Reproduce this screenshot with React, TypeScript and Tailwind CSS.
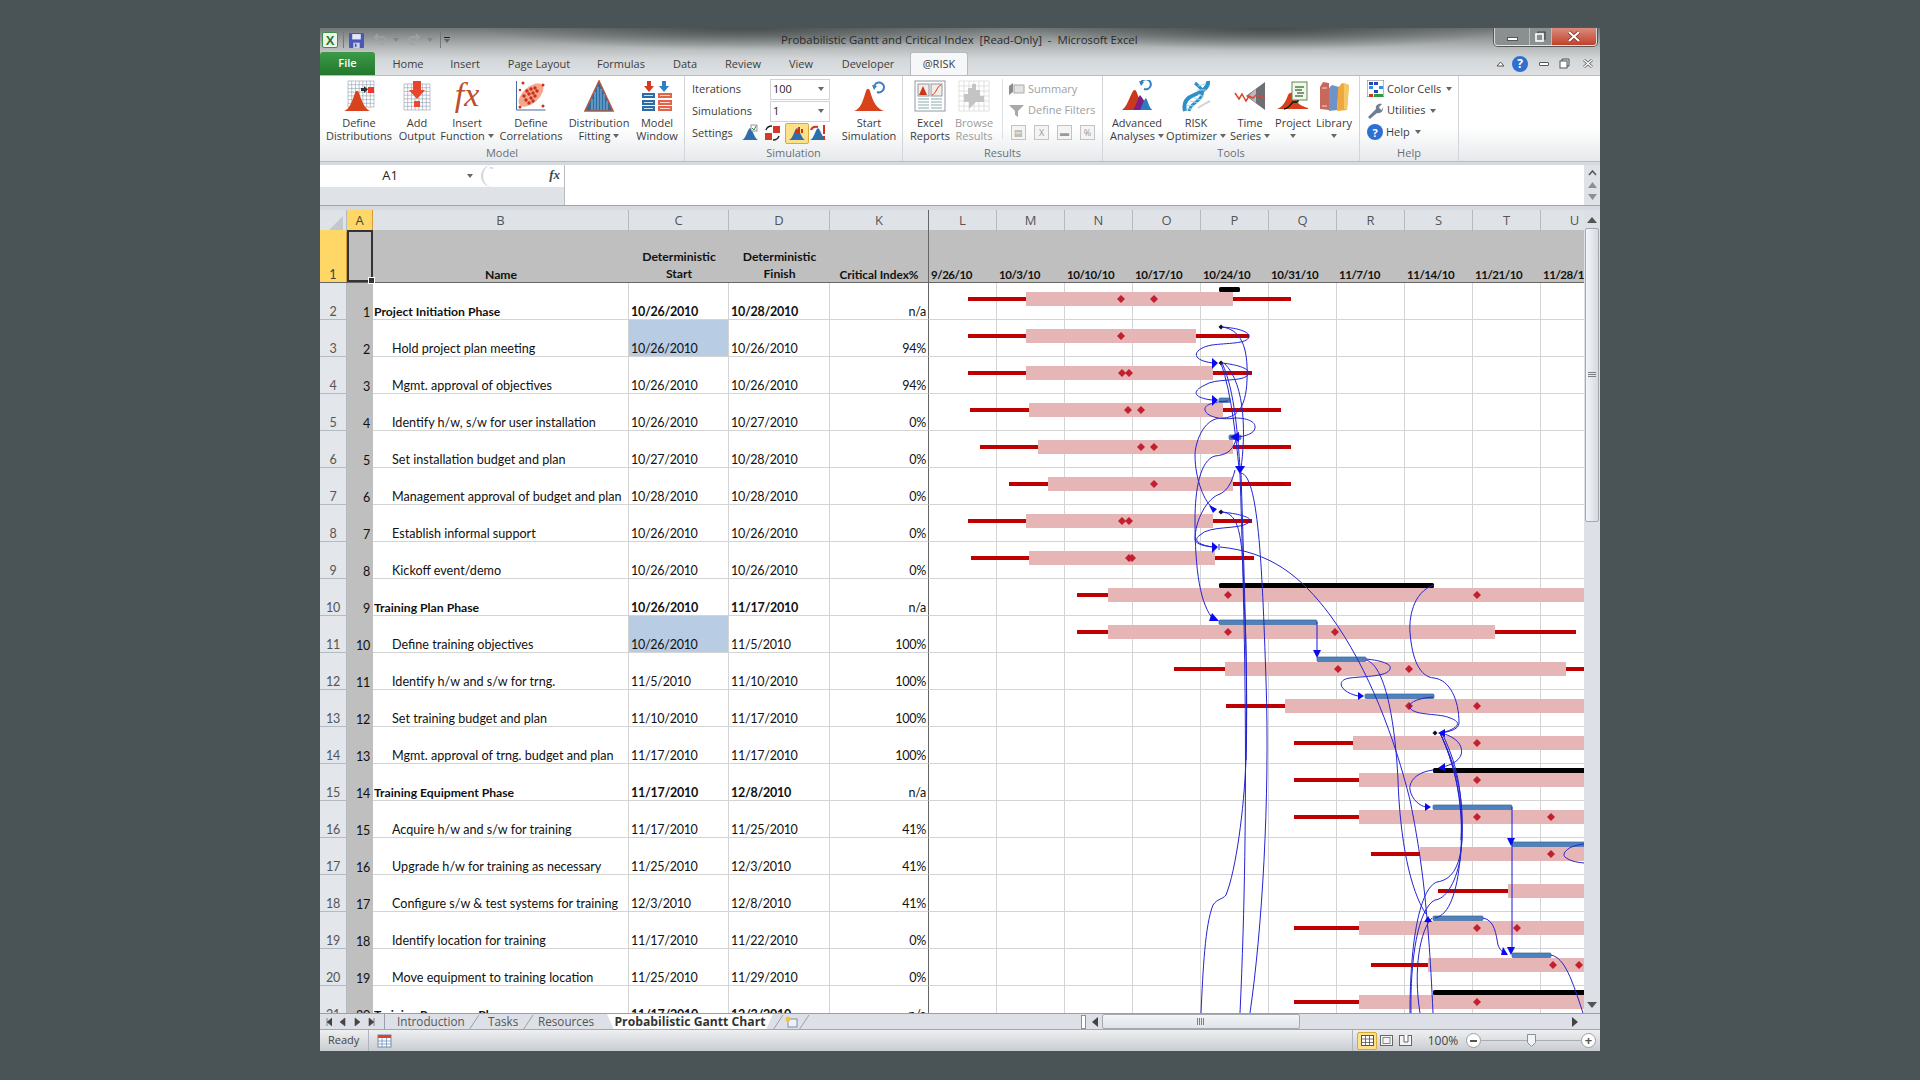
import { ReactNode } from 'react';

type BarRow = { row: number; red: [number, number]; pink: [number, number]; dots: number[] };

const COLS = ['L', 'M', 'N', 'O', 'P', 'Q', 'R', 'S', 'T', 'U'];
const WEEKS = ['9/26/10', '10/3/10', '10/10/10', '10/17/10', '10/24/10', '10/31/10', '11/7/10', '11/14/10', '11/21/10', '11/28/10'];

const ROWS = [
  { n: 1, name: 'Project Initiation Phase', start: '10/26/2010', finish: '10/28/2010', ci: 'n/a', phase: true },
  { n: 2, name: 'Hold project plan meeting', start: '10/26/2010', finish: '10/26/2010', ci: '94%', mark: true },
  { n: 3, name: 'Mgmt. approval of objectives', start: '10/26/2010', finish: '10/26/2010', ci: '94%' },
  { n: 4, name: 'Identify h/w, s/w for user installation', start: '10/26/2010', finish: '10/27/2010', ci: '0%' },
  { n: 5, name: 'Set installation budget and plan', start: '10/27/2010', finish: '10/28/2010', ci: '0%' },
  { n: 6, name: 'Management approval of budget and plan', start: '10/28/2010', finish: '10/28/2010', ci: '0%' },
  { n: 7, name: 'Establish informal support', start: '10/26/2010', finish: '10/26/2010', ci: '0%' },
  { n: 8, name: 'Kickoff event/demo', start: '10/26/2010', finish: '10/26/2010', ci: '0%' },
  { n: 9, name: 'Training Plan Phase', start: '10/26/2010', finish: '11/17/2010', ci: 'n/a', phase: true },
  { n: 10, name: 'Define training objectives', start: '10/26/2010', finish: '11/5/2010', ci: '100%', mark: true },
  { n: 11, name: 'Identify h/w and s/w for trng.', start: '11/5/2010', finish: '11/10/2010', ci: '100%' },
  { n: 12, name: 'Set training budget and plan', start: '11/10/2010', finish: '11/17/2010', ci: '100%' },
  { n: 13, name: 'Mgmt. approval of trng. budget and plan', start: '11/17/2010', finish: '11/17/2010', ci: '100%' },
  { n: 14, name: 'Training Equipment Phase', start: '11/17/2010', finish: '12/8/2010', ci: 'n/a', phase: true },
  { n: 15, name: 'Acquire h/w and s/w for training', start: '11/17/2010', finish: '11/25/2010', ci: '41%' },
  { n: 16, name: 'Upgrade h/w for training as necessary', start: '11/25/2010', finish: '12/3/2010', ci: '41%' },
  { n: 17, name: 'Configure s/w & test systems for training', start: '12/3/2010', finish: '12/8/2010', ci: '41%' },
  { n: 18, name: 'Identify location for training', start: '11/17/2010', finish: '11/22/2010', ci: '0%' },
  { n: 19, name: 'Move equipment to training location', start: '11/25/2010', finish: '11/29/2010', ci: '0%' },
  { n: 20, name: 'Training Resources Phase', start: '11/17/2010', finish: '12/3/2010', ci: 'n/a', phase: true },
];

const BARS: BarRow[] = [
  { row: 2, red: [968, 1291], pink: [1026, 1233], dots: [1121, 1154] },
  { row: 3, red: [968, 1249], pink: [1026, 1196], dots: [1121] },
  { row: 4, red: [968, 1252], pink: [1026, 1213], dots: [1122, 1129] },
  { row: 5, red: [970, 1281], pink: [1029, 1223], dots: [1128, 1141] },
  { row: 6, red: [980, 1291], pink: [1038, 1233], dots: [1141, 1154] },
  { row: 7, red: [1009, 1291], pink: [1048, 1233], dots: [1154] },
  { row: 8, red: [968, 1252], pink: [1026, 1213], dots: [1122, 1129] },
  { row: 9, red: [971, 1254], pink: [1029, 1215], dots: [1129, 1132] },
  { row: 10, red: [1077, 1584], pink: [1108, 1584], dots: [1228, 1477] },
  { row: 11, red: [1077, 1576], pink: [1108, 1495], dots: [1228, 1335] },
  { row: 12, red: [1174, 1584], pink: [1225, 1566], dots: [1338, 1409] },
  { row: 13, red: [1226, 1584], pink: [1285, 1584], dots: [1409, 1477] },
  { row: 14, red: [1294, 1584], pink: [1353, 1584], dots: [1477] },
  { row: 15, red: [1294, 1584], pink: [1359, 1584], dots: [1477] },
  { row: 16, red: [1294, 1584], pink: [1359, 1584], dots: [1477, 1551] },
  { row: 17, red: [1371, 1584], pink: [1420, 1584], dots: [1551] },
  { row: 18, red: [1438, 1584], pink: [1508, 1584], dots: [] },
  { row: 19, red: [1294, 1584], pink: [1359, 1584], dots: [1477, 1517] },
  { row: 20, red: [1371, 1584], pink: [1428, 1584], dots: [1553, 1579] },
  { row: 21, red: [1294, 1584], pink: [1359, 1584], dots: [1477] },
];

const SUMMARY = [
  [1219, 1240, 287],
  [1219, 1434, 583],
  [1433, 1590, 768],
  [1433, 1590, 990],
];

const TASKBARS = [
  [1219, 1230, 398],
  [1229, 1241, 435],
  [1219, 1317, 620],
  [1317, 1366, 657],
  [1365, 1434, 694],
  [1433, 1512, 805],
  [1512, 1590, 842],
  [1433, 1483, 916],
  [1512, 1551, 953],
];

const LINKS = [
  'M1222 327C1240 328 1251 333 1249 337C1247 344 1226 343 1212 345C1194 348 1188 360 1213 363',
  'M1222 327C1245 330 1248 355 1247 380C1246 410 1235 418 1222 418C1202 418 1195 445 1195 455C1195 480 1205 503 1213 508',
  'M1222 363C1240 365 1254 370 1247 376C1240 382 1215 378 1205 385C1190 392 1195 398 1212 400',
  'M1228 401C1212 402 1204 405 1205 410C1207 418 1225 420 1235 418C1250 418 1256 423 1255 428C1254 434 1245 436 1238 437',
  'M1236 440C1232 452 1225 455 1215 456C1200 460 1195 490 1195 520C1195 570 1200 605 1214 620',
  'M1235 470C1232 482 1228 490 1220 494C1207 498 1195 520 1195 540C1197 545 1205 546 1213 547',
  'M1222 512C1240 514 1256 518 1248 523C1238 530 1210 525 1200 535C1190 542 1205 546 1213 547',
  'M1222 363C1235 390 1238 440 1240 468',
  'M1224 363C1247 385 1245 440 1241 468',
  'M1221 363C1232 395 1236 440 1239 468',
  'M1240 473C1244 600 1250 800 1240 1013',
  'M1241 473C1245 600 1248 700 1246 760C1244 810 1236 870 1226 895C1222 900 1218 898 1213 905C1205 925 1203 970 1201 1013',
  'M1241 473C1258 476 1262 560 1266 680C1270 800 1262 930 1250 1013',
  'M1222 512C1238 514 1243 530 1244 600C1247 650 1247 700 1246 760',
  'M1220 547C1270 552 1300 575 1330 615C1370 670 1395 740 1410 800C1420 850 1428 900 1433 1013',
  'M1434 585C1412 592 1409 620 1410 632C1412 660 1420 677 1434 678C1450 680 1459 700 1459 723C1459 730 1447 732 1441 733',
  'M1366 659C1385 661 1392 665 1390 669C1387 677 1365 676 1350 678C1335 680 1340 692 1358 696',
  'M1433 697C1418 698 1407 703 1410 708C1415 716 1440 713 1450 718C1462 722 1460 728 1441 733',
  'M1440 733C1455 736 1464 745 1461 755C1458 762 1450 765 1443 767',
  'M1440 733C1458 770 1464 800 1462 840C1460 870 1450 880 1437 882C1420 888 1410 940 1410 1013',
  'M1440 733C1458 770 1466 820 1460 860C1455 885 1445 899 1435 900C1418 908 1410 960 1411 1013',
  'M1440 733C1460 775 1464 820 1460 860C1457 890 1450 915 1435 918',
  'M1442 733C1460 770 1463 800 1461 840',
  'M1433 770C1412 773 1409 785 1410 790C1412 800 1420 806 1426 807',
  'M1483 918C1495 920 1496 935 1498 945C1500 950 1502 952 1505 953',
  'M1551 955C1565 958 1572 980 1583 1013',
  'M1584 844C1565 846 1562 855 1565 857C1570 861 1575 862 1584 863',
  'M1366 660C1385 665 1395 720 1398 780C1400 840 1410 890 1426 914',
  'M1432 918C1420 930 1413 970 1420 1013',
];

const ARROWS = [
  '1218,363 1212,358 1212,369',
  '1218,400 1212,395 1212,406',
  '1217,509 1209,505 1213,513',
  '1218,547 1212,542 1212,553',
  '1230,437 1239,432 1239,442',
  '1240,474 1235,466 1245,466',
  '1219,621 1212,613 1209,621',
  '1317,658 1313,650 1321,650',
  '1364,696 1358,692 1358,700',
  '1438,733 1445,729 1445,737',
  '1438,768 1445,763 1445,771',
  '1431,807 1425,803 1425,811',
  '1511,846 1507,838 1515,838',
  '1511,955 1507,947 1515,947',
  '1508,955 1503,947 1501,955',
  '1428,916 1424,922 1432,922',
];

function Caret({ className = '' }: { className?: string }) {
  return (
    <svg width="6" height="4" viewBox="0 0 6 4" className={`inline-block ${className}`}>
      <path d="M0 0h6L3 4z" fill="#666" />
    </svg>
  );
}

function Grid({ x, y, size, n, stroke = '#8f9cab' }: { x: number; y: number; size: number; n: number; stroke?: string }) {
  const s = size / n;
  return (
    <g stroke={stroke} strokeWidth=".6" fill="none">
      <rect x={x} y={y} width={size} height={size} fill="#fff" />
      {Array.from({ length: n - 1 }, (_, i) => (
        <g key={i}>
          <path d={`M${x + s * (i + 1)} ${y}v${size}`} />
          <path d={`M${x} ${y + s * (i + 1)}h${size}`} />
        </g>
      ))}
    </g>
  );
}

function Icon({ children, size = 32 }: { children: ReactNode; size?: number }) {
  return (
    <svg width={size} height={size} viewBox="0 0 32 32">
      {children}
    </svg>
  );
}

const Bell = ({ fill = '#d8421c' }: { fill?: string }) => <path d="M1 31C8 29 10 20 13 11C14 8 16 8 17 11C20 22 24 29 31 31z" fill={fill} />;

function DefineIcon() {
  return (
    <Icon>
      <Grid x={5} y={1} size={26} n={7} />
      <rect x={25} y={7} width={6} height={6} fill="#e8392a" />
      <path d="M18 8h3V6l4 3.500-4 3.500v-2h-3z" fill="#333" />
      <path d="M1 31C7 29 9 21 12 13C13 10 15 10 16 13C19 22 22 29 27 31z" fill="#d8421c" />
    </Icon>
  );
}
function AddOutputIcon() {
  return (
    <Icon>
      <Grid x={3} y={4} size={26} n={7} />
      <rect x={13} y={21} width={6} height={6} fill="#f0452c" />
      <path d="M12 1h8v9h4l-8 9-8-9h4z" fill="#e8452a" />
    </Icon>
  );
}
function FxIcon() {
  return <span className="block h-[32px] text-[34px] leading-[30px] italic text-[#bd4f2d] [font-family:'Liberation_Serif',serif]">fx</span>;
}
function CorrelIcon() {
  const dots = [[12, 11], [16, 9], [20, 8], [9, 16], [14, 14], [18, 13], [22, 11], [11, 20], [16, 18], [20, 16], [14, 23], [18, 21]];
  return (
    <Icon>
      <path d="M1.500 1v29h29" stroke="#46689c" fill="none" />
      <ellipse cx="16" cy="15" rx="15" ry="8" fill="#f6a68c" transform="rotate(-42 16 15)" />
      {dots.map(([x, y]) => (
        <circle key={`${x}${y}`} cx={x} cy={y} r="1.700" fill="#c8301a" />
      ))}
      <circle cx="8" cy="3" r="1.500" fill="#c8301a" />
      <circle cx="5" cy="10" r="1.200" fill="#c8301a" />
      <circle cx="5" cy="27" r="1.500" fill="#c8301a" />
      <circle cx="28" cy="26" r="1.500" fill="#c8301a" />
      <circle cx="28" cy="5" r="1.500" fill="#c8301a" />
    </Icon>
  );
}
function FittingIcon() {
  return (
    <Icon>
      <path d="M16 1L2 31h28z" fill="#2e6da4" stroke="#b5573f" strokeWidth="1.600" />
      <path d="M12 12v18M15 7v23M18 9v21M21 14v16M9 19v11M24 21v9" stroke="#9cc3e4" strokeWidth=".9" />
    </Icon>
  );
}
function ModelWinIcon() {
  return (
    <Icon>
      <path d="M6 1h4v5h3l-5 6-5-6h3z" fill="#d43a22" />
      <path d="M21 1h4v5h3l-5 6-5-6h3z" fill="#2f7fc6" />
      {[13, 20, 26].map(y => (
        <g key={y}>
          <rect x={1} y={y} width={13} height={5} fill="#2e6da4" />
          <rect x={3} y={y + 2} width={9} height={1} fill="#cfe0f0" />
          <rect x={17} y={y} width={14} height={5} fill="#e0654a" />
          <rect x={19} y={y + 2} width={10} height={1} fill="#f8d8cf" />
        </g>
      ))}
    </Icon>
  );
}
function StartIcon() {
  return (
    <Icon>
      <Bell />
      <path d="M21 7a5 5 0 1 1 3 5" stroke="#3f7fc0" strokeWidth="2" fill="none" />
      <path d="M19 5l5 1-3 4z" fill="#3f7fc0" />
    </Icon>
  );
}
function ReportsIcon() {
  return (
    <Icon>
      <rect x="1" y="1" width="30" height="30" fill="#fff" stroke="#8f99a4" />
      <rect x="4" y="4" width="11" height="12" fill="#f4ece4" stroke="#8f99a4" />
      <rect x="17" y="4" width="11" height="12" fill="#f4ece4" stroke="#8f99a4" />
      <path d="M5 15L9 6l4 9z" fill="#c8361c" />
      <path d="M18 15c4-1 5-9 9-10" stroke="#c8361c" fill="none" />
      <path d="M4 19h11M4 22h11M4 25h11M4 28h11M17 19h11M17 22h11M17 25h11M17 28h11" stroke="#8aa" strokeWidth="1.200" />
    </Icon>
  );
}
function BrowseIcon() {
  return (
    <Icon>
      <Grid x={1} y={1} size={30} n={6} stroke="#cfcfcf" />
      <path d="M6 22V14h4V8h4V4h4v6h4v6h4v6h-8l-7 7v-7z" fill="#c4c4c4" />
    </Icon>
  );
}
function AdvancedIcon() {
  return (
    <Icon>
      <path d="M1 30C6 27 8 18 12 11C14 9 15 10 16 13C19 22 24 27 31 30z" fill="#c93a1d" />
      <path d="M12 30C15 26 17 18 19 15C22 18 26 27 31 30z" fill="#7a1f88" />
      <path d="M19 30C21 26 23 19 25 18C27 21 28 27 31 30z" fill="#2d7dbd" />
      <path d="M20 3a5 5 0 1 1 3 6" stroke="#2f7fc6" strokeWidth="2" fill="none" />
      <path d="M18 1l5 1-3 4z" fill="#2f7fc6" />
    </Icon>
  );
}
function OptimizerIcon() {
  return (
    <Icon>
      <path d="M28 1C29 9 19 13 14 15C6 18 3 23 5 31" stroke="#2d8fc4" strokeWidth="4" fill="none" />
      <path d="M15 3C20 7 25 11 21 17C17 23 10 24 9 31" stroke="#2d8fc4" strokeWidth="3" fill="none" />
      <path d="M18 6l7-2M17 10l9 0M18 14l6 3M14 18l7 2M10 21l8 2M6 25l8 1M6 28l5 1" stroke="#a6d5ee" strokeWidth="1" />
      <path d="M18 28l8-5 4-2" stroke="#d0d3d6" strokeWidth="2" fill="none" />
    </Icon>
  );
}
function TimeIcon() {
  return (
    <Icon>
      <path d="M31 2v28L12 16z" fill="#6d6f74" />
      <path d="M22 9v14L14 16z" fill="#b9bbbe" />
      <path d="M1 13l4 6 3-5 4 7 3-5 4 2 3-3 9 3" stroke="#e0452a" strokeWidth="1.500" fill="none" />
    </Icon>
  );
}
function ProjectIcon() {
  return (
    <Icon>
      <path d="M0 29C6 27 9 21 11 15C13 12 16 12 17 16C19 23 24 26 31 28v1z" fill="#d4401c" />
      <path d="M7 29c4 0 6-4 9-7h4" stroke="#111" strokeWidth="1.400" fill="none" />
      <path d="M19 20l2 3 1-3z" fill="#111" />
      <rect x="15" y="2" width="15" height="18" fill="#f3f6ee" stroke="#5e8a4e" />
      <path d="M18 7h9M18 10h7M20 13h7M18 16h8" stroke="#4f7d47" strokeWidth="1.300" />
    </Icon>
  );
}
function LibraryIcon() {
  return (
    <Icon>
      <path d="M2 7l3-5 6 1v27l-9-1z" fill="#c8685b" />
      <path d="M4 8h5M4 26h5" stroke="#f3d8d2" />
      <path d="M11 8l3-3 7 2-2 23-8 1z" fill="#6f93c7" />
      <path d="M20 8l4-5 7 2-2 25-10 1z" fill="#eea83c" />
      <path d="M26 3l5 2-2 25-3-1z" fill="#f5c766" />
    </Icon>
  );
}

function SmallSettings({ kind }: { kind: number }) {
  const hill = <path d="M1 16C5 15 6 6 9 4C12 6 13 14 17 16z" fill="#2f6ea8" />;
  return (
    <svg width="18" height="18" viewBox="0 0 18 18">
      {kind === 0 && (
        <>
          {hill}
          <rect x="10" y="1" width="6" height="6" fill="#fff" stroke="#668" strokeWidth=".7" />
          <path d="M11 4l2 2 2-4" stroke="#2a8a3a" fill="none" />
        </>
      )}
      {kind === 1 && (
        <>
          <rect x="1" y="9" width="7" height="7" fill="#d23a2a" />
          <rect x="9" y="2" width="7" height="7" fill="#d23a2a" />
          <path d="M2 6c1-3 3-4 6-4M15 12c-1 3-3 4-6 4" stroke="#222" strokeWidth="1.300" fill="none" />
        </>
      )}
      {kind === 2 && (
        <>
          {hill}
          <path d="M7 6h2v3H7zM10 3h2v6h-2zM13 5h2v4h-2z" fill="#c8361c" />
        </>
      )}
      {kind === 3 && (
        <>
          {hill}
          <path d="M2 6c1-3 3-4 7-3" stroke="#c8361c" strokeWidth="2" fill="none" />
          <path d="M14 1h2v9h-2zM14 12h2v3h-2z" fill="#d8301c" />
        </>
      )}
    </svg>
  );
}

function Big({ w, lines, icon, muted, caret }: { w: number; lines: [string, string?]; icon: ReactNode; muted?: boolean; caret?: boolean }) {
  return (
    <div className={`flex shrink-0 flex-col items-center pt-[4px] ${muted ? 'text-[#9a9a9a]' : 'text-[#3b3b3b]'}`} style={{ width: w }}>
      <div className="flex h-[32px] items-center justify-center">{icon}</div>
      <div className="mt-[4px] whitespace-nowrap text-center text-[11px] leading-[13px]">
        <div>{lines[0]}</div>
        <div className="flex h-[13px] items-center justify-center gap-[3px]">
          {lines[1]}
          {caret && <Caret />}
        </div>
      </div>
    </div>
  );
}

function Group({ w, label, children, pl = 0 }: { w: number; label: string; children: ReactNode; pl?: number }) {
  return (
    <div className="flex h-full shrink-0 flex-col border-r border-[#d2d6db]" style={{ width: w }}>
      <div className="flex h-[67px] w-full shrink-0" style={{ paddingLeft: pl }}>
        {children}
      </div>
      <div className="h-[18px] shrink-0 text-center text-[11px] leading-[20px] text-[#6a6f76]">{label}</div>
    </div>
  );
}

function Tab({ w, children }: { w: number; children: ReactNode }) {
  return (
    <div className="shrink-0 pt-[4px] text-center text-[11px] leading-[16px] text-[#3d3d3d]" style={{ width: w }}>
      {children}
    </div>
  );
}

function Gantt() {
  return (
    <svg className="absolute left-0 top-0" width="1264" height="803" viewBox="320 210 1264 803">
      {BARS.map(b => {
        const top = 292 + 37 * (b.row - 2);
        return (
          <g key={b.row}>
            <rect x={b.red[0]} y={top + 5} width={b.red[1] - b.red[0]} height={4} fill="#c00000" />
            <rect x={b.pink[0]} y={top} width={b.pink[1] - b.pink[0]} height={14} fill="#e6b5b5" />
            {b.dots.map(x => (
              <path key={x} d={`M${x} ${top + 3}l4 4-4 4-4-4z`} fill="#c2202e" />
            ))}
          </g>
        );
      })}
      {SUMMARY.map(([a, b, y]) => (
        <rect key={y} x={a} y={y} width={b - a} height={5} rx={1.500} fill="#000" />
      ))}
      {TASKBARS.map(([a, b, y]) => (
        <rect key={y} x={a} y={y} width={b - a} height={4.500} rx={1} fill="#4f81bd" stroke="#3b6496" strokeWidth=".7" />
      ))}
      {[[1221, 327], [1221, 363], [1221, 512], [1435, 733]].map(([x, y]) => (
        <path key={y} d={`M${x} ${y - 2.500}l2.500 2.500-2.500 2.500-2.500-2.500z`} fill="#111" />
      ))}
      <path d="M1219 544v6" stroke="#1a1ad8" />
      <path d="M1317 622V652M1512 807V950" stroke="#1818e0" fill="none" />
      {LINKS.map(d => (
        <path key={d} d={d} stroke="#2323d4" strokeWidth="1" fill="none" />
      ))}
      {ARROWS.map(p => (
        <polygon key={p} points={p} fill="#0a0af0" />
      ))}
    </svg>
  );
}

function Sheet() {
  const gridCols = 'grid grid-cols-[27px_26px_256px_100px_101px_99px_repeat(10,68px)]';
  const cell = 'border-b border-r border-[#d4d4d4]';
  const figure = 'text-[12.500px] tracking-[-0.27px]';
  return (
    <div className="relative h-[803px] w-[1264px] shrink-0 overflow-hidden bg-white [font-family:Lato,'Liberation_Sans',sans-serif] text-[12.600px] leading-[17px] text-[#111]">
      <div className={`${gridCols} h-[20px] bg-[#dfe3e8] text-[13px] leading-[21px] text-[#555] [font-family:'Open_Sans',sans-serif]`}>
        <div className="relative border-r border-[#b5bac0]">
          <svg width="14" height="14" viewBox="0 0 14 14" className="absolute bottom-[2px] right-[3px]">
            <path d="M14 0v14H0z" fill="#c3c8cd" />
          </svg>
        </div>
        <div className="border-r border-b border-[#d39d3a] bg-[#ffd766] text-center text-[#444]">A</div>
        {['B', 'C', 'D'].map(c => (
          <div key={c} className="border-r border-[#b5bac0] text-center">{c}</div>
        ))}
        <div className="border-r border-[#666] text-center">K</div>
        {COLS.map(c => (
          <div key={c} className="border-r border-[#b5bac0] text-center">{c}</div>
        ))}
      </div>
      <div className={`${gridCols} h-[53px] border-b border-[#666] bg-[#bfbfbf] font-bold`}>
        <div className="flex items-end justify-center border-r border-[#d39d3a] bg-[#ffd766] font-normal leading-[15px] text-[#444]">1</div>
        <div className="relative border-2 border-[#333]">
          <div className="absolute -bottom-[3px] -right-[3px] h-[5px] w-[5px] bg-[#333] outline outline-1 outline-white" />
        </div>
        <div className="flex items-end justify-center text-[12.200px] leading-[15px]">Name</div>
        <div className="flex items-end justify-center text-center text-[12.200px]">Deterministic<br />Start</div>
        <div className="flex items-end justify-center text-center text-[12.200px]">Deterministic<br />Finish</div>
        <div className="flex items-end justify-center whitespace-nowrap border-r border-[#666] text-[11.800px] leading-[15px]">Critical Index%</div>
        {WEEKS.map(w => (
          <div key={w} className="flex items-end whitespace-nowrap pl-[2px] text-[11.500px] leading-[15px] tracking-[-0.45px]">{w}</div>
        ))}
      </div>
      {ROWS.map(r => (
        <div key={r.n} className={`${gridCols} h-[37px] leading-[15px]`}>
          <div className={`flex items-end justify-center border-b border-r border-[#b5bac0] bg-[#e3e6ea] text-[#555] ${figure}`}>{r.n + 1}</div>
          <div className={`flex items-end justify-end bg-[#bfbfbf] pr-[3px] ${figure}`}>{r.n}</div>
          <div className={`flex items-end whitespace-nowrap ${cell} ${r.phase ? 'pl-[1px] text-[12.200px] font-bold' : 'pl-[19px]'}`}>{r.name}</div>
          <div className={`flex items-end pl-[2px] ${figure} ${cell} ${r.phase ? 'font-bold' : ''} ${r.mark ? 'bg-[#b8cce4]' : ''}`}>{r.start}</div>
          <div className={`flex items-end pl-[2px] ${figure} ${cell} ${r.phase ? 'font-bold' : ''}`}>{r.finish}</div>
          <div className={`flex items-end justify-end border-b border-r border-b-[#d4d4d4] border-r-[#666] pr-[2px] ${figure}`}>{r.ci}</div>
          {COLS.map(c => (
            <div key={c} className={cell} />
          ))}
        </div>
      ))}
      <Gantt />
    </div>
  );
}

function VScroll() {
  return (
    <div className="relative flex h-[803px] w-[16px] flex-col items-center bg-[#dde1e7]">
      <svg width="10" height="6" viewBox="0 0 10 6" className="mt-[7px]">
        <path d="M0 6h10L5 0z" fill="#555" />
      </svg>
      <div className="mt-[5px] flex h-[294px] w-[14px] items-center justify-center rounded-[2px] border border-[#a5aab0] bg-gradient-to-r from-[#f3f5f8] to-[#d6dae1] text-[#777]">
        <svg width="8" height="6" viewBox="0 0 8 6">
          <path d="M0 .5h8M0 2.500h8M0 4.500h8" stroke="#7c8086" />
        </svg>
      </div>
      <svg width="10" height="6" viewBox="0 0 10 6" className="absolute bottom-[5px]">
        <path d="M0 0h10L5 6z" fill="#555" />
      </svg>
    </div>
  );
}

function SheetTabs() {
  const slash = (
    <svg width="12" height="16" viewBox="0 0 12 16" className="shrink-0">
      <path d="M0 16L10 1" stroke="#9aa0a7" fill="none" />
    </svg>
  );
  return (
    <div className="flex h-[16px] w-full items-stretch border-t border-[#9aa0a7] bg-[#dde1e7] text-[11.700px] leading-[15px] text-[#555] [font-family:'Open_Sans',sans-serif]">
      <div className="flex w-[59px] items-center justify-around text-[#444]">
        {['M5 1v8M5 5l5-4v8z', 'M8 1v8L3 5z', 'M3 1v8l5-4z', 'M7 1v8M7 5L2 1v8z'].map(d => (
          <svg key={d} width="10" height="10" viewBox="0 0 10 10">
            <path d={d} stroke="#444" fill="#444" strokeWidth=".6" />
          </svg>
        ))}
      </div>
      <div className="ml-[5px] flex items-center">
        <div className="h-full w-px bg-[#9aa0a7]" />
        <div className="w-[84px] pl-[12px]">Introduction</div>
        {slash}
        <div className="w-[42px] pl-[7px]">Tasks</div>
        {slash}
        <div className="w-[70px] pl-[3px]">Resources</div>
        <div className="ml-[2px] h-full w-[166px] bg-white text-center text-[12.200px] font-bold leading-[15px] text-[#333] [clip-path:polygon(0_0,100%_0,96%_100%,4%_100%)]">
          Probabilistic Gantt Chart
        </div>
        {slash}
        <svg width="14" height="12" viewBox="0 0 14 12" className="shrink-0">
          <rect x="3" y="3" width="9" height="8" fill="#eef2f7" stroke="#7d8fa8" />
          <circle cx="3" cy="3" r="2.500" fill="#f3c441" />
        </svg>
        {slash}
      </div>
      <div className="ml-auto flex w-[522px] items-center">
        <div className="ml-[3px] h-[14px] w-[5px] border border-[#8a9097] bg-white" />
        <svg width="7" height="10" viewBox="0 0 7 10" className="ml-[6px]">
          <path d="M6 0v10L0 5z" fill="#444" />
        </svg>
        <div className="ml-[3px] flex h-[15px] w-[198px] items-center justify-center rounded-[2px] border border-[#a5aab0] bg-gradient-to-b from-[#f3f5f8] to-[#dfe2e8]">
          <svg width="8" height="7" viewBox="0 0 8 7">
            <path d="M.5 0v7M2.500 0v7M4.500 0v7M6.500 0v7" stroke="#7c8086" />
          </svg>
        </div>
        <svg width="7" height="10" viewBox="0 0 7 10" className="ml-[272px]">
          <path d="M0 0v10l6-5z" fill="#444" />
        </svg>
      </div>
    </div>
  );
}

function StatusBar() {
  return (
    <div className="flex h-[22px] w-full items-center border-t border-[#a2a7ad] bg-gradient-to-b from-[#eef0f2] to-[#c9ccd1] text-[11px] text-[#444]">
      <div className="w-[48px] pl-[8px]">Ready</div>
      <div className="h-full w-px bg-[#b0b4ba]" />
      <svg width="15" height="15" viewBox="0 0 15 15" className="ml-[8px]">
        <rect x="1" y="2" width="13" height="12" fill="#fff" stroke="#7b8a9e" />
        <rect x="1" y="2" width="13" height="3" fill="#d9452b" />
        <path d="M5 5v9M9.500 5v9M1 8h13M1 11h13" stroke="#5b86bb" strokeWidth=".7" />
      </svg>
      <div className="ml-auto flex h-full items-center">
        <div className="mr-[4px] h-full w-px bg-[#b0b4ba]" />
        <div className="flex h-[18px] w-[20px] items-center justify-center rounded-[2px] border border-[#d9a93a] bg-[#fde08a]">
          <svg width="13" height="11" viewBox="0 0 13 11">
            <rect x=".5" y=".5" width="12" height="10" fill="#fff" stroke="#555" />
            <path d="M4.500 0v11M8.500 0v11M0 4h13M0 7.500h13" stroke="#555" strokeWidth=".8" />
          </svg>
        </div>
        <svg width="13" height="11" viewBox="0 0 13 11" className="ml-[3px]">
          <rect x=".5" y=".5" width="12" height="10" fill="#f4f4f4" stroke="#666" />
          <rect x="3" y="2.500" width="7" height="6" fill="none" stroke="#888" />
        </svg>
        <svg width="13" height="11" viewBox="0 0 13 11" className="ml-[6px]">
          <rect x=".5" y=".5" width="12" height="10" fill="#f4f4f4" stroke="#666" />
          <path d="M5 0v7h4V0" fill="#fff" stroke="#666" />
        </svg>
        <div className="ml-[14px] w-[34px] text-center text-[12px]">100%</div>
        <div className="ml-[6px] flex h-[15px] w-[15px] items-center justify-center rounded-full border border-[#9aa0a6] bg-white">
          <div className="h-[2px] w-[7px] bg-[#555]" />
        </div>
        <div className="relative h-px w-[100px] bg-[#a8adb3]">
          <svg width="9" height="13" viewBox="0 0 9 13" className="absolute -top-[6px] left-[46px]">
            <path d="M.5.5h8v8L4.500 12.500.5 8.500z" fill="#f2f3f5" stroke="#8a9097" />
          </svg>
        </div>
        <div className="mr-[4px] flex h-[15px] w-[15px] items-center justify-center rounded-full border border-[#9aa0a6] bg-white text-[13px] font-bold leading-none text-[#555]">+</div>
      </div>
    </div>
  );
}

export default function App() {
  return (
    <div className="h-[1080px] w-[1920px] overflow-hidden bg-[#4a5356] pl-[320px] pt-[28px] [font-family:'Open_Sans',sans-serif]">
      <div className="flex h-[1023px] w-[1280px] flex-col bg-[#d5dae0]">
        {/* Title bar and ribbon tabs sit on the aero glass */}
        <div className="relative h-[47px] shrink-0 bg-[radial-gradient(ellipse_260px_22px_at_33%_0,#3f4545cc,transparent),radial-gradient(ellipse_240px_22px_at_74%_0,#3f4545dd,transparent),linear-gradient(to_bottom,#6f7576_0%,#b3b6b6_40%,#d3d6d8_65%,#dfe2e5_100%)]">
          <div className="relative flex h-[24px] items-center">
            <div className="ml-[2px] flex h-[16px] w-[16px] items-center justify-center rounded-[2px] border border-[#3f8f48] bg-[#eef6ea] text-[13px] font-bold leading-none text-[#1c7a30] [font-family:'Liberation_Sans',sans-serif]">X</div>
            <div className="ml-[5px] h-[16px] w-px bg-[#777]" />
            <svg width="15" height="15" viewBox="0 0 14 14" className="ml-[5px]">
              <rect width="14" height="14" rx="1" fill="#4a56b8" />
              <rect x="3" y="1" width="8" height="5" fill="#e4e9f7" />
              <rect x="4" y="9" width="6" height="5" fill="#cdd3de" />
              <rect x="5.500" y="10" width="1.500" height="3" fill="#4a56b8" />
            </svg>
            <svg width="14" height="14" viewBox="0 0 14 14" className="ml-[9px]">
              <path d="M3 4h6a3.500 3.500 0 0 1 0 7H6M5 1L2 4l3 3" stroke="#a0a4a4" strokeWidth="1.600" fill="none" />
            </svg>
            <Caret className="ml-[6px] opacity-40" />
            <svg width="14" height="14" viewBox="0 0 14 14" className="ml-[8px]">
              <path d="M11 4H5a3.500 3.500 0 0 0 0 7h3M9 1l3 3-3 3" stroke="#a0a4a4" strokeWidth="1.600" fill="none" />
            </svg>
            <Caret className="ml-[6px] opacity-40" />
            <div className="ml-[7px] h-[16px] w-px bg-[#777]" />
            <div className="ml-[3px] flex flex-col items-center gap-[1px]">
              <div className="h-px w-[6px] bg-[#222]" />
              <Caret />
            </div>
            <div className="absolute left-[461px] top-[3px] whitespace-pre text-[11.400px] leading-[18px] text-[#2a2a2a]">
              Probabilistic Gantt and Critical Index  [Read-Only]  -  Microsoft Excel
            </div>
            <div className="absolute left-[1174px] top-0 flex h-[18px] w-[103px] overflow-hidden rounded-b-[4px] border border-t-0 border-[#ffffffaa] shadow-[0_0_0_1px_#555]">
              <div className="flex w-[35px] items-center justify-center border-r border-[#ffffff66] bg-[#8a8f90]">
                <div className="mt-[5px] h-[4px] w-[11px] border border-[#555] bg-white" />
              </div>
              <div className="flex w-[22px] items-center justify-center border-r border-[#ffffff66] bg-[#8a8f90]">
                <svg width="11" height="11" viewBox="0 0 11 11">
                  <path d="M3 3V1h7v7H8" fill="none" stroke="#444" strokeWidth="1.200" />
                  <rect x="1" y="3" width="7" height="7" fill="none" stroke="#fff" strokeWidth="1.600" />
                </svg>
              </div>
              <div className="flex flex-1 items-center justify-center bg-gradient-to-b from-[#d98a7c] to-[#c0402a]">
                <svg width="14" height="11" viewBox="0 0 14 11">
                  <path d="M2 1l10 9M12 1L2 10" stroke="#7a2a20" strokeWidth="3.600" />
                  <path d="M2 1l10 9M12 1L2 10" stroke="#fff" strokeWidth="2.200" />
                </svg>
              </div>
            </div>
          </div>
          <div className="flex h-[23px] items-stretch">
            <div className="flex w-[55px] items-center justify-center rounded-t-[3px] bg-gradient-to-b from-[#3c9a46] to-[#23782e] text-[11px] font-semibold text-white">File</div>
            <Tab w={66}>Home</Tab>
            <Tab w={48}>Insert</Tab>
            <Tab w={100}>Page Layout</Tab>
            <Tab w={64}>Formulas</Tab>
            <Tab w={64}>Data</Tab>
            <Tab w={52}>Review</Tab>
            <Tab w={64}>View</Tab>
            <Tab w={70}>Developer</Tab>
            <div className="ml-[7px] w-[58px] rounded-t-[3px] border border-b-0 border-[#b6babf] bg-[#f6f7f8] pt-[3px] text-center text-[11px] leading-[16px] text-[#3d3d3d]">@RISK</div>
            <div className="ml-auto flex items-center pr-[7px]">
              <svg width="9" height="7" viewBox="0 0 9 7">
                <path d="M1 6l3.500-4L8 6z" fill="#fff" stroke="#555" />
              </svg>
              <div className="ml-[7px] flex h-[16px] w-[16px] items-center justify-center rounded-full bg-[#2f6fd0] text-[12px] font-bold leading-none text-white">?</div>
              <div className="ml-[11px] h-[4px] w-[10px] rounded-[1px] border border-[#555] bg-white" />
              <svg width="11" height="11" viewBox="0 0 11 11" className="ml-[10px]">
                <path d="M3 3V1h7v7H8" fill="none" stroke="#555" />
                <rect x="1" y="3" width="7" height="7" fill="#fff" stroke="#555" />
              </svg>
              <svg width="10" height="9" viewBox="0 0 10 9" className="ml-[13px]">
                <path d="M1 1l8 7M9 1L1 8" stroke="#555" strokeWidth="2.800" />
                <path d="M1 1l8 7M9 1L1 8" stroke="#fff" strokeWidth="1.400" />
              </svg>
            </div>
          </div>
        </div>

        {/* Ribbon */}
        <div className="flex h-[87px] shrink-0 border-y border-[#b9bdc2] bg-gradient-to-b from-white from-60% to-[#e6e9ec]">
          <Group w={365} label="Model" pl={5}>
            <Big w={68} lines={['Define', 'Distributions']} icon={<DefineIcon />} />
            <Big w={48} lines={['Add', 'Output']} icon={<AddOutputIcon />} />
            <Big w={52} lines={['Insert', 'Function']} icon={<FxIcon />} caret />
            <Big w={76} lines={['Define', 'Correlations']} icon={<CorrelIcon />} />
            <Big w={60} lines={['Distribution', 'Fitting']} icon={<FittingIcon />} caret />
            <Big w={56} lines={['Model', 'Window']} icon={<ModelWinIcon />} />
          </Group>
          <Group w={218} label="Simulation" pl={7}>
            <div className="w-[145px] shrink-0 pt-[2px] text-[11px] text-[#3b3b3b]">
              <div className="flex h-[22px] items-center">
                <div className="w-[78px]">Iterations</div>
                <div className="flex h-[21px] w-[60px] items-center justify-between border border-[#d0d4d9] bg-white px-[2px] text-[#222]">
                  100
                  <Caret className="mr-[3px]" />
                </div>
              </div>
              <div className="flex h-[22px] items-center">
                <div className="w-[78px]">Simulations</div>
                <div className="flex h-[21px] w-[60px] items-center justify-between border border-[#d0d4d9] bg-white px-[2px] text-[#222]">
                  1
                  <Caret className="mr-[3px]" />
                </div>
              </div>
              <div className="flex h-[22px] items-center">
                <div className="w-[49px]">Settings</div>
                <SmallSettings kind={0} />
                <div className="ml-[5px]"><SmallSettings kind={1} /></div>
                <div className="ml-[3px] flex h-[21px] w-[24px] items-center justify-center rounded-[2px] border border-[#d9a93a] bg-[#fde08a]">
                  <SmallSettings kind={2} />
                </div>
                <SmallSettings kind={3} />
              </div>
            </div>
            <Big w={64} lines={['Start', 'Simulation']} icon={<StartIcon />} />
          </Group>
          <Group w={200} label="Results" pl={2}>
            <Big w={50} lines={['Excel', 'Reports']} icon={<ReportsIcon />} />
            <Big w={38} lines={['Browse', 'Results']} icon={<BrowseIcon />} muted />
            <div className="ml-[9px] mt-[3px] h-[60px] w-px bg-[#dcdfe3]" />
            <div className="ml-[5px] flex flex-col pt-[2px] text-[11px] text-[#a0a0a0]">
              <div className="flex h-[22px] items-center gap-[3px]">
                <svg width="17" height="14" viewBox="0 0 17 14">
                  <path d="M1 13V4l4-3v9z" fill="#8d8d8d" />
                  <rect x="6" y="3" width="10" height="8" fill="#e3e3e3" stroke="#aaa" />
                </svg>
                Summary
              </div>
              <div className="flex h-[22px] items-center gap-[3px]">
                <svg width="17" height="14" viewBox="0 0 17 14">
                  <path d="M1 1h15l-6 6v6l-3-2V7z" fill="#a9a9a9" />
                </svg>
                Define Filters
              </div>
              <div className="flex h-[22px] items-center gap-[8px] pl-[3px]">
                {['▤', 'X', '▬', '%'].map(g => (
                  <div key={g} className="flex h-[15px] w-[15px] items-center justify-center border border-[#c3c3c3] bg-[#f4f4f4] text-[9px] leading-none text-[#999]">{g}</div>
                ))}
              </div>
            </div>
          </Group>
          <Group w={257} label="Tools" pl={4}>
            <Big w={60} lines={['Advanced', 'Analyses']} icon={<AdvancedIcon />} caret />
            <Big w={58} lines={['RISK', 'Optimizer']} icon={<OptimizerIcon />} caret />
            <Big w={50} lines={['Time', 'Series']} icon={<TimeIcon />} caret />
            <Big w={36} lines={['Project', '']} icon={<ProjectIcon />} caret />
            <Big w={46} lines={['Library', '']} icon={<LibraryIcon />} caret />
          </Group>
          <Group w={99} label="Help" pl={7}>
            <div className="flex flex-col pt-[2px] text-[11px] text-[#3b3b3b]">
              <div className="flex h-[22px] items-center gap-[3px]">
                <svg width="17" height="17" viewBox="0 0 17 17">
                  <rect width="17" height="17" fill="#fff" stroke="#777" />
                  <path d="M2 2h4v3H2zM7 2h4v3H7z" fill="#2346c4" />
                  <path d="M2 6h4v3H2zM12 6h4v3h-4z" fill="#2f8fe0" />
                  <path d="M7 10h4v3H7z" fill="#2346c4" />
                  <path d="M2 14h4v3H2z" fill="#d8301c" />
                  <path d="M7 14h9v3H7z" fill="#2a9a3a" />
                </svg>
                Color Cells
                <Caret className="ml-[2px]" />
              </div>
              <div className="flex h-[22px] items-center gap-[3px]">
                <svg width="17" height="17" viewBox="0 0 17 17">
                  <path d="M1 15L9 7c-1-3 2-6 6-5l-3 3 1 2 2 1 1-3c1 4-3 7-6 6l-7 6z" fill="#6f7f92" />
                </svg>
                Utilities
                <Caret className="ml-[2px]" />
              </div>
              <div className="flex h-[22px] items-center gap-[3px]">
                <div className="flex h-[16px] w-[16px] items-center justify-center rounded-full bg-[#2f6fd0] text-[11px] font-bold leading-none text-white">?</div>
                Help
                <Caret className="ml-[2px]" />
              </div>
            </div>
          </Group>
        </div>

        {/* Formula bar */}
        <div className="mt-[3px] flex h-[41px] shrink-0 border-b border-[#a0a5ab]">
          <div className="w-[245px] shrink-0 border-r border-[#b9bdc2] bg-[#dfe3e8]">
            <div className="relative flex h-[22px] items-center bg-white text-[13px] text-[#222]">
              <div className="w-[140px] text-center text-[13px]">A1</div>
              <Caret className="absolute left-[147px]" />
              <div className="absolute left-[161px] h-[22px] w-[84px] rounded-l-[12px] border-l-2 border-[#cfd4da] pl-[6px] text-[10px] leading-[14px] text-[#bcc1c6]">
                ˜
                <span className="absolute right-[5px] top-[3px] text-[13px] font-bold italic leading-[14px] text-[#444] [font-family:'Liberation_Serif',serif]">fx</span>
              </div>
            </div>
          </div>
          <div className="flex-1 bg-white" />
          <div className="flex w-[16px] flex-col items-center justify-around bg-[#dfe3e8] py-[2px]">
            <svg width="9" height="6" viewBox="0 0 9 6"><path d="M1 5l3.500-4L8 5" stroke="#555" strokeWidth="1.500" fill="none" /></svg>
            <svg width="9" height="6" viewBox="0 0 9 6"><path d="M0 6h9L4.500 0z" fill="#8a9097" /></svg>
            <svg width="9" height="6" viewBox="0 0 9 6"><path d="M0 0h9L4.500 6z" fill="#8a9097" /></svg>
          </div>
        </div>
        <div className="h-[4px] shrink-0 bg-[#d5dae0]" />

        {/* Worksheet */}
        <div className="flex h-[803px] shrink-0">
          <Sheet />
          <VScroll />
        </div>
        <SheetTabs />
        <StatusBar />
      </div>
    </div>
  );
}
